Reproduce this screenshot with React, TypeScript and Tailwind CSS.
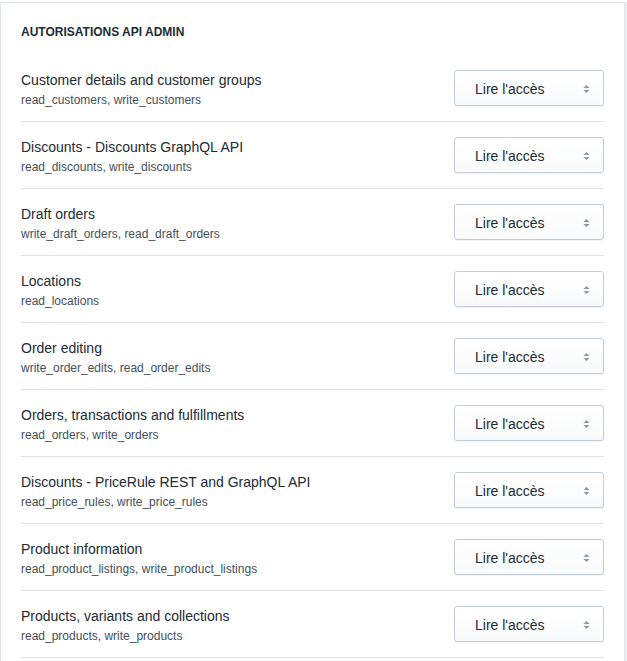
import React from "react";

const scopes = [
  { title: "Customer details and customer groups", access: "read_customers, write_customers" },
  { title: "Discounts - Discounts GraphQL API", access: "read_discounts, write_discounts" },
  { title: "Draft orders", access: "write_draft_orders, read_draft_orders" },
  { title: "Locations", access: "read_locations" },
  { title: "Order editing", access: "write_order_edits, read_order_edits" },
  { title: "Orders, transactions and fulfillments", access: "read_orders, write_orders" },
  { title: "Discounts - PriceRule REST and GraphQL API", access: "read_price_rules, write_price_rules" },
  { title: "Product information", access: "read_product_listings, write_product_listings" },
  { title: "Products, variants and collections", access: "read_products, write_products" },
];

function SelectArrows() {
  return (
    <svg width="7" height="10" viewBox="0 0 7 10" className="text-[#8c97a3]">
      <path d="M3.5 1 L6.5 4 H0.5 Z" fill="currentColor" />
      <path d="M3.5 9 L6.5 6 H0.5 Z" fill="currentColor" />
    </svg>
  );
}

function AccessSelect() {
  return (
    <div className="flex h-[36px] w-[150px] shrink-0 items-center justify-between rounded-[3px] border border-[#c4cdd5] bg-gradient-to-b from-white to-[#f9fafb] pl-[20px] pr-[13px] pt-[2px] text-[14px] text-[#212b36] shadow-[0_1px_0_0_rgba(22,29,37,0.05)]">
      <span>Lire l'accès</span>
      <SelectArrows />
    </div>
  );
}

export default function App() {
  return (
    <div className="flex min-h-screen bg-white pt-[2px] font-['Liberation_Sans',Arial,sans-serif]">
      <div className="w-[625px] border-l border-r border-t border-[#dfe3e8] px-[20px]">
        <h2 className="pb-[15px] pt-[21px] text-[12px] font-bold uppercase leading-[16px] text-[#212b36]">
          Autorisations API Admin
        </h2>
        {scopes.map((s) => (
          <div
            key={s.title}
            className="box-border flex h-[67px] items-center justify-between border-b border-[#dfe3e8]"
          >
            <div className="flex flex-col pt-[3px]">
              <span className="text-[14px] leading-[20px] text-[#212b36]">{s.title}</span>
              <span className="text-[12px] leading-[20px] text-[#454f5b]">{s.access}</span>
            </div>
            <AccessSelect />
          </div>
        ))}
      </div>
      <div className="w-[2px] bg-[#eceef1]" />
    </div>
  );
}
